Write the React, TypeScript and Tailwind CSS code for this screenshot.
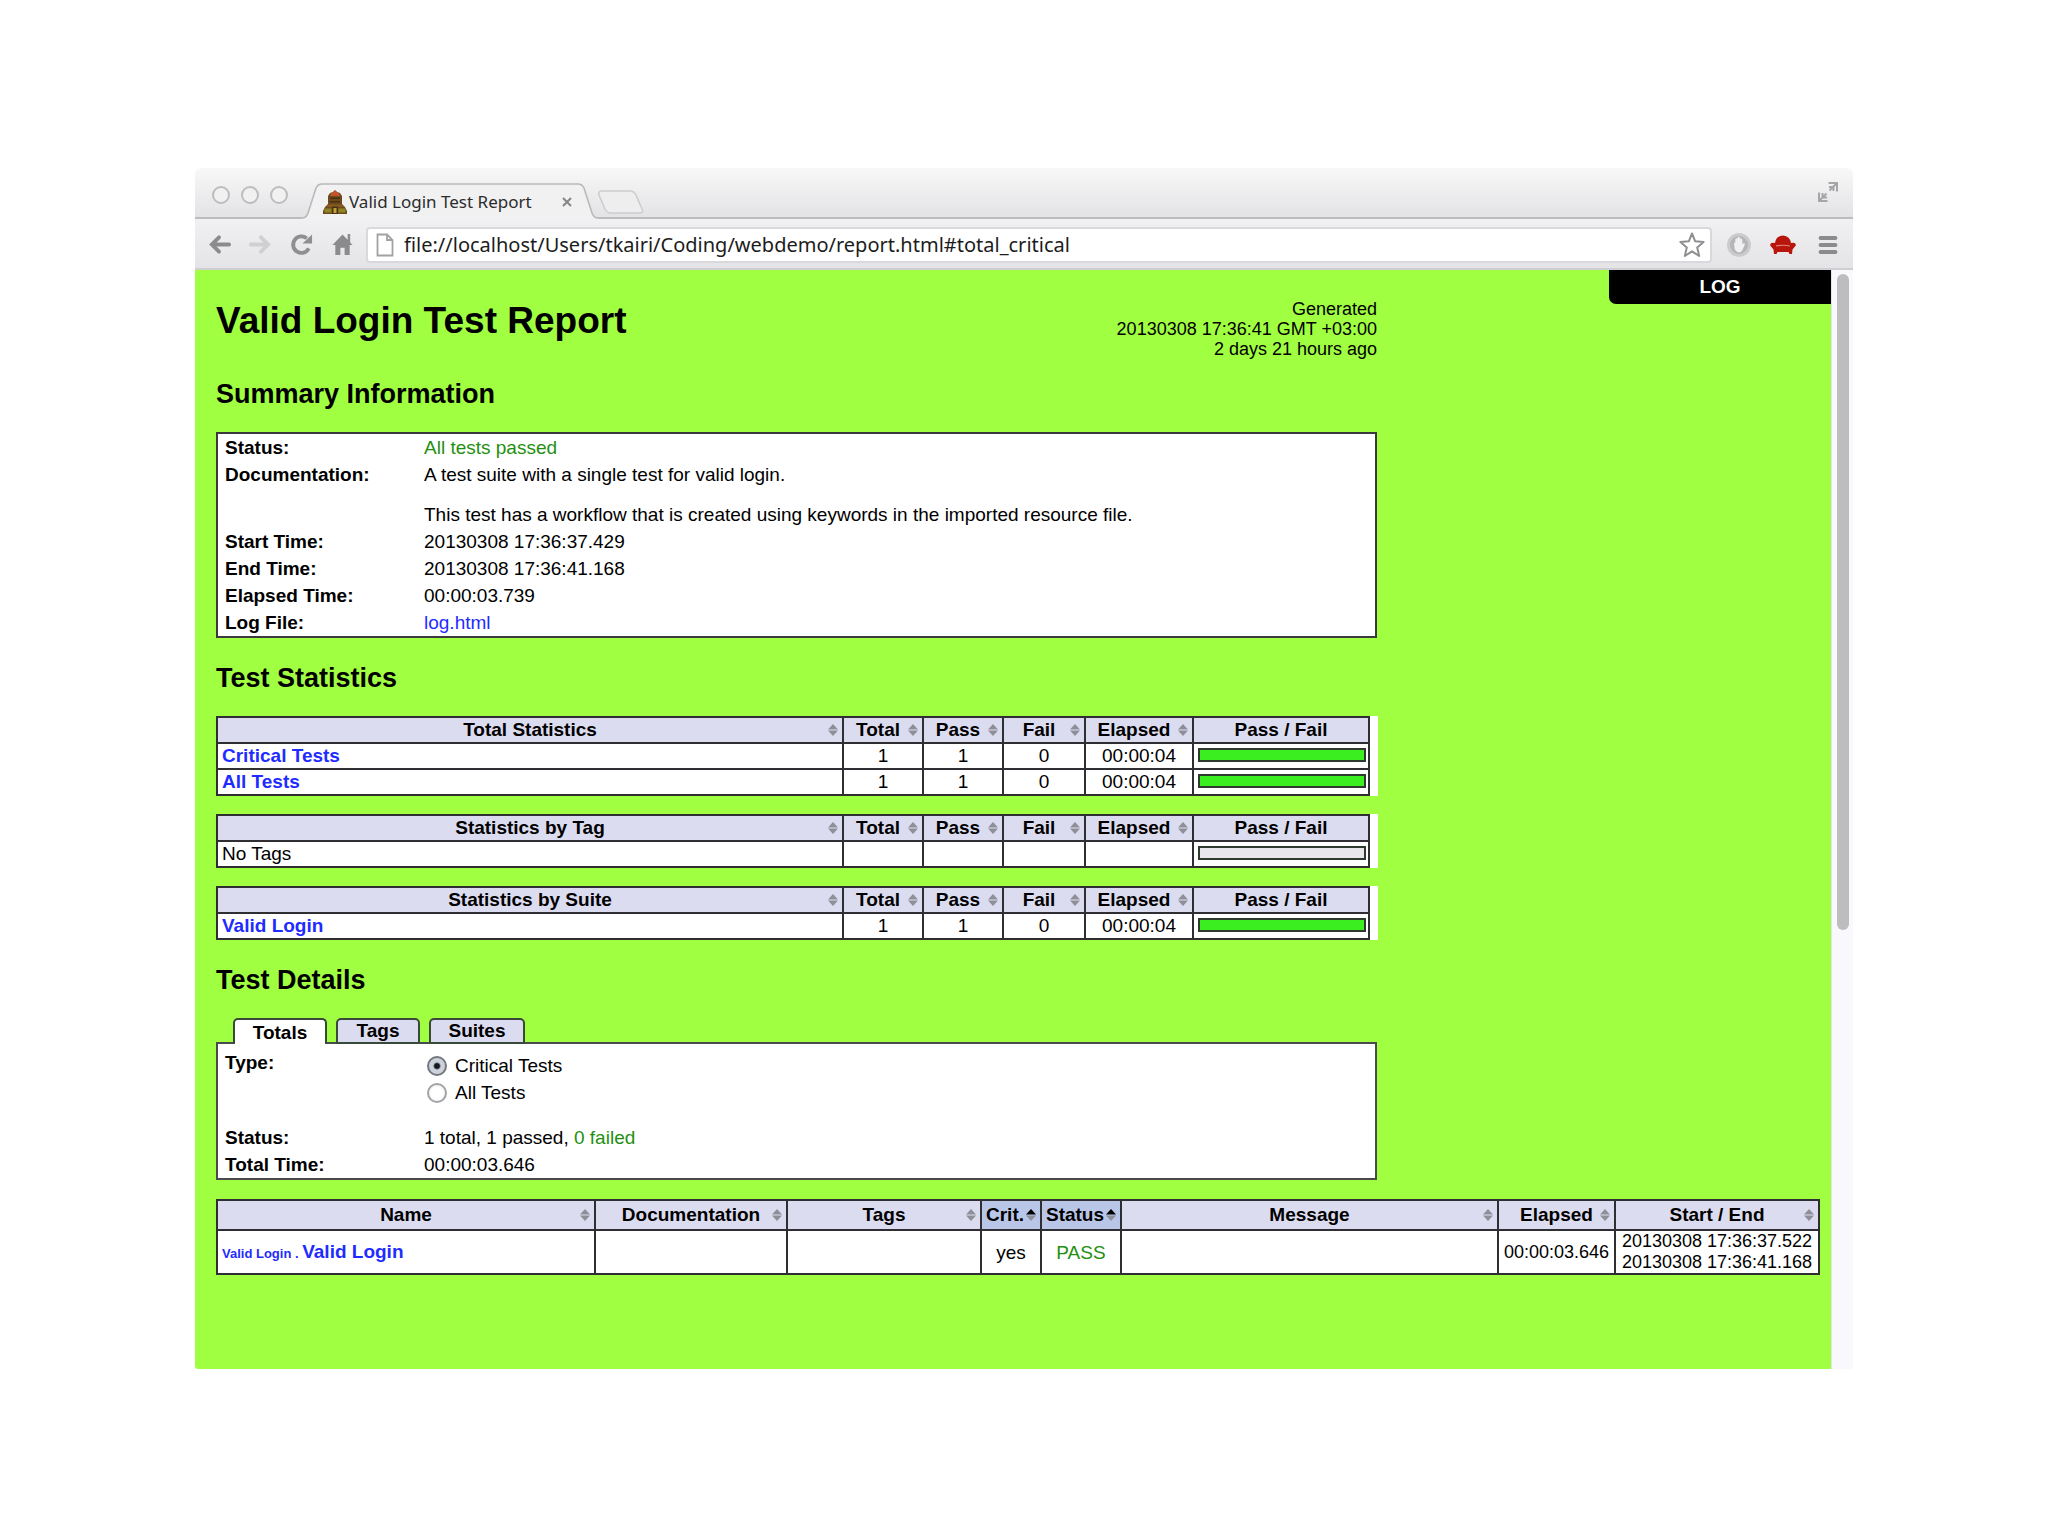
import { useState } from 'react'
import type { ReactNode } from 'react'

type StatRow = { name: string; link?: boolean; total?: string; pass?: string; fail?: string; elapsed?: string }
type StatGroup = { title: string; rows: StatRow[] }

const stats: StatGroup[] = [
  {
    title: 'Total Statistics',
    rows: [
      { name: 'Critical Tests', link: true, total: '1', pass: '1', fail: '0', elapsed: '00:00:04' },
      { name: 'All Tests', link: true, total: '1', pass: '1', fail: '0', elapsed: '00:00:04' },
    ],
  },
  { title: 'Statistics by Tag', rows: [{ name: 'No Tags' }] },
  {
    title: 'Statistics by Suite',
    rows: [{ name: 'Valid Login', link: true, total: '1', pass: '1', fail: '0', elapsed: '00:00:04' }],
  },
]

const cell = 'border-2 border-[#2e2e33] p-0'

function SortIcon({ active }: { active?: boolean }) {
  return (
    <svg viewBox="0 0 10 12" className="absolute right-[4px] top-1/2 -mt-[6px] h-[12px] w-[10px]">
      <path d="M5 0 L10 5.4 H0 Z" fill={active ? '#000' : '#8f8f99'} />
      <path d="M0 6.6 H10 L5 12 Z" fill="#8f8f99" />
    </svg>
  )
}

function SortHeader({ children, className = '', active }: { children: ReactNode; className?: string; active?: boolean }) {
  return (
    <th className={`${cell} ${active ? 'bg-[#b9c6e8]' : 'bg-[#dcdcf0]'}`}>
      <button type="button" className={`relative block w-full text-center font-bold ${className}`}>
        {children}
        <SortIcon active={active} />
      </button>
    </th>
  )
}

function StatTable({ group }: { group: StatGroup }) {
  return (
    <div className="w-[1162px] max-w-full bg-white pr-[8px]">
      <table className="w-full table-fixed border-collapse text-center leading-[24px]">
        <colgroup>
          <col />
          <col className="w-[80px]" />
          <col className="w-[80px]" />
          <col className="w-[82px]" />
          <col className="w-[108px]" />
          <col className="w-[176px]" />
        </colgroup>
        <thead>
          <tr>
            <SortHeader>{group.title}</SortHeader>
            <SortHeader className="pr-[10px]">Total</SortHeader>
            <SortHeader className="pr-[10px]">Pass</SortHeader>
            <SortHeader className="pr-[10px]">Fail</SortHeader>
            <SortHeader className="pr-[10px]">Elapsed</SortHeader>
            <th className={`${cell} bg-[#dcdcf0]`}>Pass / Fail</th>
          </tr>
        </thead>
        <tbody>
          {group.rows.map((r) => (
            <tr key={r.name} className="h-[26px]">
              <td className={`${cell} text-left`}>
                <div className="px-[4px]">
                  {r.link ? <a href="#stats" className="font-bold text-[#1f2cff]">{r.name}</a> : r.name}
                </div>
              </td>
              <td className={cell}>{r.total}</td>
              <td className={cell}>{r.pass}</td>
              <td className={cell}>{r.fail}</td>
              <td className={cell}>{r.elapsed}</td>
              <td className={cell}>
                <div className={`mr-[2px] mb-[2px] ml-[4px] h-[14px] border-2 border-[#2e3a2e] ${r.total ? 'bg-[#3bee20]' : 'bg-[#e8e6ea]'}`} />
              </td>
            </tr>
          ))}
        </tbody>
      </table>
    </div>
  )
}

function InfoRow({ label, children }: { label: string; children: ReactNode }) {
  return (
    <div className="flex">
      <dt className="w-[199px] shrink-0 font-bold">{label}</dt>
      <dd>{children}</dd>
    </div>
  )
}

function Heading({ children }: { children: ReactNode }) {
  return <h2 className="mt-6 mb-[22px] text-[27px] leading-[32px] font-bold">{children}</h2>
}

function TitleBar() {
  return (
    <div className="relative flex h-[51px] items-end rounded-t-[6px] border-b-2 border-[#bcbcc0] bg-linear-to-b from-[#f8f8f8] to-[#e3e3e6] pl-[17px]">
      <div className="mb-[13px] flex gap-[11px]">
        {['Close', 'Minimize', 'Zoom'].map((n) => (
          <button key={n} type="button" aria-label={n} className="h-[18px] w-[18px] rounded-full border-2 border-[#bdbdbf] bg-[#f1f1f2]" />
        ))}
      </div>
      <div className="relative -mb-[2px] ml-[14px] h-[36px] w-[296px]">
        <svg viewBox="0 0 296 36" className="absolute inset-0 h-full w-full">
          <path d="M0 35 C4 35 5 33 6 30 L14 5 Q16 1 20 1 H276 Q280 1 282 5 L290 30 Q292 35 296 35 V36 H0 Z" fill="#f1f1f2" />
          <path d="M0 35 C4 35 5 33 6 30 L14 5 Q16 1 20 1 H276 Q280 1 282 5 L290 30 Q292 35 296 35" fill="none" stroke="#b9b9bc" strokeWidth="1.6" />
        </svg>
        <div className="relative flex h-full items-center pt-[2px] pr-[26px] pl-[21px]">
          <svg viewBox="0 0 24 24" className="h-[24px] w-[24px]">
            <path d="M7 3 L10 2 L12 0 L14 2 L17 3 L19 6 V14 L22 17 L24 21 V24 H0 V21 L2 17 L5 14 V6 Z" fill="#6b4a1c" />
            <path d="M8 3.5 L12 0.5 L16 3.5 L17 6 H7 Z" fill="#c4542b" />
            <path d="M7 7.5h10v1.5H7zM7 11h10v1.5H7z" fill="#4a2f14" />
            <path d="M5 14.5 H19 L21 17 H3 Z" fill="#8a5a22" />
            <path d="M1.5 18.5 H8.5 V22.5 H1.5 Z M15.5 18.5 H22.5 V22.5 H15.5 Z" fill="#8f8426" />
            <path d="M9 16.5h6V24H9z" fill="#4a3410" />
            <path d="M10.5 18h3v5h-3z" fill="#c0a03c" />
          </svg>
          <span className="ml-[2px] flex-1 font-['Noto_Sans',sans-serif] text-[17px] whitespace-nowrap text-[#2c2c2c]">Valid Login Test Report</span>
          <button type="button" aria-label="Close tab">
            <svg viewBox="0 0 10 10" className="h-[10px] w-[10px]">
              <path d="M1 1 L9 9 M9 1 L1 9" stroke="#858588" strokeWidth="2" />
            </svg>
          </button>
        </div>
      </div>
      <button type="button" aria-label="New tab" className="mb-[3px]">
        <svg viewBox="0 0 46 24" className="h-[24px] w-[46px]">
          <path d="M4 1 H32 Q36 1 38 5 L44 19 Q46 23 41 23 H13 Q9 23 7 19 L1 5 Q0 1 4 1 Z" fill="#eeeeef" stroke="#cdcdd0" strokeWidth="1.6" />
        </svg>
      </button>
      <button type="button" aria-label="Full screen" className="mr-[14px] mb-[14px] ml-auto">
        <svg viewBox="0 0 22 22" className="h-[22px] w-[22px]" fill="none" stroke="#a6a6a9" strokeWidth="2">
          <path d="M11.5 2 H20 V10.5 M19 3 L12.5 9.5 M12 6 H16.5 V10" />
          <path d="M2 11.5 V20 H10.5 M3 19 L9.5 12.5 M5.5 12 V16.5 H10" />
        </svg>
      </button>
    </div>
  )
}

function Toolbar() {
  return (
    <div className="flex h-[51px] items-center border-b-2 border-[#cfced2] bg-linear-to-b from-[#f1f0f2] to-[#e4e3e6] pt-[2px] pr-[15px] pl-[13px]">
      <div className="flex gap-[18px]">
        <button type="button" aria-label="Back">
          <svg viewBox="0 0 24 24" className="h-[23px] w-[23px]" fill="none" stroke="#8b8b8e" strokeWidth="4" strokeLinecap="round">
            <path d="M22 12 H5 M11.5 4.5 L4 12 L11.5 19.5" />
          </svg>
        </button>
        <button type="button" aria-label="Forward">
          <svg viewBox="0 0 24 24" className="h-[23px] w-[23px]" fill="none" stroke="#d0d0d3" strokeWidth="4" strokeLinecap="round">
            <path d="M2 12 H19 M12.5 4.5 L20 12 L12.5 19.5" />
          </svg>
        </button>
        <button type="button" aria-label="Reload">
          <svg viewBox="0 0 24 24" className="h-[23px] w-[23px]">
            <path d="M19.6 16 A8.6 8.6 0 1 1 17.5 5.6" fill="none" stroke="#8f8f92" strokeWidth="4" />
            <path d="M23 1.5 V11 H13 Z" fill="#8f8f92" />
          </svg>
        </button>
        <button type="button" aria-label="Home">
          <svg viewBox="0 0 24 24" className="h-[23px] w-[23px]" fill="#8b8b8e">
            <path d="M12 1.5 L1.5 12.5 H4.5 V23 H9.8 V15.5 H14.2 V23 H19.5 V12.5 H22.5 L20 9.8 V1 H17.4 V7 Z" />
          </svg>
        </button>
      </div>
      <div className="ml-[12px] flex h-[36px] flex-1 items-center rounded-[4px] border-2 border-[#d9d8dc] bg-white pr-[5px] pl-[8px]">
        <svg viewBox="0 0 18 24" className="h-[24px] w-[18px]">
          <path d="M1.5 1.5 H11 L16.5 7 V22.5 H1.5 Z M11 1.5 V7 H16.5" fill="#fff" stroke="#a2a2a5" strokeWidth="1.8" />
        </svg>
        <input
          aria-label="Address"
          defaultValue="file://localhost/Users/tkairi/Coding/webdemo/report.html#total_critical"
          className="ml-[10px] min-w-0 flex-1 bg-transparent font-['Noto_Sans',sans-serif] text-[20px] text-[#1c1c1c] outline-none"
        />
        <button type="button" aria-label="Bookmark">
          <svg viewBox="0 0 26 26" className="h-[26px] w-[26px]">
            <path d="M13 1.5 L16.2 9.3 L24.6 10 L18.2 15.4 L20.2 24 L13 19.3 L5.8 24 L7.8 15.4 L1.4 10 L9.8 9.3 Z" fill="#fff" stroke="#8f8f92" strokeWidth="2" strokeLinejoin="round" />
          </svg>
        </button>
      </div>
      <div className="ml-[14px] flex items-center gap-[18px]">
        <button type="button" aria-label="Ad blocker">
          <svg viewBox="0 0 26 26" className="h-[26px] w-[26px]">
            <circle cx="13" cy="13" r="10.5" fill="#b5b5b7" stroke="#cbcbcd" strokeWidth="3" />
            <path d="M8 12 Q8 10 9.3 10.5 V7 Q10.5 5.5 11.5 7 V5.5 Q13 4 14 5.5 V7 Q15.5 6 16.3 7.5 V12 L18 11 Q19.5 11.5 18.5 13.5 L16.5 18 Q15 20.5 12.5 20.5 Q9.5 20 8.7 17 Z" fill="#f0f0f1" />
          </svg>
        </button>
        <button type="button" aria-label="CouchDB">
          <svg viewBox="0 0 26 20" className="h-[20px] w-[26px]">
            <path d="M5 8 Q6 1 13 0.5 Q20 1 21 8 Q26 7 25.8 10.5 L22.5 14.5 L22 19 H19.5 L18.5 17 H7.5 L6.5 19 H4 L3.5 14.5 L0.2 10.5 Q0 7 5 8 Z" fill="#b8150c" />
            <path d="M6 11 Q13 9.5 20 11" fill="none" stroke="#e4857c" strokeWidth="1.2" />
          </svg>
        </button>
        <button type="button" aria-label="Menu" className="ml-[4px]">
          <svg viewBox="0 0 20 20" className="h-[20px] w-[20px]" stroke="#8b8b8e" strokeWidth="3.8" strokeLinecap="round">
            <path d="M2.5 3 H17.5 M2.5 10 H17.5 M2.5 17 H17.5" />
          </svg>
        </button>
      </div>
    </div>
  )
}

function TestDetails() {
  const [type, setType] = useState('Critical Tests')
  return (
    <>
      <div className="relative z-10 -mb-[2px] flex items-end gap-[9px] pl-[17px] leading-[20px] font-bold">
        <button type="button" className="h-[26px] w-[94px] rounded-t-[5px] border-2 border-b-0 border-[#3a4a3a] bg-white pt-[2px] font-bold">Totals</button>
        <button type="button" className="h-[26px] w-[84px] rounded-t-[5px] border-2 border-[#3a4a3a] bg-[#dcdcf0] font-bold">Tags</button>
        <button type="button" className="h-[26px] w-[96px] rounded-t-[5px] border-2 border-[#3a4a3a] bg-[#dcdcf0] font-bold">Suites</button>
      </div>
      <dl className="w-[1161px] max-w-full border-2 border-[#4a4a4e] bg-white px-[7px] pt-[5px] leading-[27px]">
        <InfoRow label="Type:">
          <div className="pt-[3px] pb-[18px]">
            {['Critical Tests', 'All Tests'].map((t) => (
              <label key={t} className="flex h-[27px] items-center gap-[8px] pl-[3px]">
                <input
                  type="radio"
                  name="type"
                  checked={type === t}
                  onChange={() => setType(t)}
                  className="h-[20px] w-[20px] appearance-none rounded-full border-2 border-[#a3a3a8] bg-radial from-[#ffffff] from-50% to-[#e6e6e8] checked:border-[#75777e] checked:from-[#15171c] checked:from-20% checked:to-[#ccd2dc] checked:to-35%"
                />
                {t}
              </label>
            ))}
          </div>
        </InfoRow>
        <InfoRow label="Status:">
          1 total, 1 passed, <span className="text-[#1f9010]">0 failed</span>
        </InfoRow>
        <InfoRow label="Total Time:">00:00:03.646</InfoRow>
      </dl>
      <table className="mt-[19px] w-full table-fixed border-collapse bg-white text-center">
        <colgroup>
          <col />
          <col className="w-[192px]" />
          <col className="w-[194px]" />
          <col className="w-[60px]" />
          <col className="w-[80px]" />
          <col className="w-[377px]" />
          <col className="w-[117px]" />
          <col className="w-[204px]" />
        </colgroup>
        <thead className="leading-[28px]">
          <tr>
            <SortHeader>Name</SortHeader>
            <SortHeader>Documentation</SortHeader>
            <SortHeader>Tags</SortHeader>
            <SortHeader active className="pr-[12px]">Crit.</SortHeader>
            <SortHeader active className="pr-[12px]">Status</SortHeader>
            <SortHeader>Message</SortHeader>
            <SortHeader>Elapsed</SortHeader>
            <SortHeader>Start / End</SortHeader>
          </tr>
        </thead>
        <tbody className="leading-[21px]">
          <tr className="h-[44px]">
            <td className={`${cell} text-left`}>
              <a href="#test" className="pl-[4px] font-bold text-[#1f2cff]">
                <span className="text-[13px]">Valid Login . </span>
                Valid Login
              </a>
            </td>
            <td className={cell} />
            <td className={cell} />
            <td className={cell}>yes</td>
            <td className={`${cell} text-[#1f9010]`}>PASS</td>
            <td className={cell} />
            <td className={`${cell} text-[18px]`}>00:00:03.646</td>
            <td className={`${cell} text-[18px]`}>
              20130308 17:36:37.522
              <br />
              20130308 17:36:41.168
            </td>
          </tr>
        </tbody>
      </table>
    </>
  )
}

export default function App() {
  return (
    <div className="bg-white px-[195px] py-[168px]">
      <div className="overflow-hidden rounded-t-[6px] rounded-b-[3px] font-['Liberation_Sans',Arial,sans-serif] text-[19px] text-black">
        <TitleBar />
        <Toolbar />
        <div className="flex">
          <main className="relative min-w-0 flex-1 bg-[#a0ff40] pt-[28px] pr-[11px] pb-[94px] pl-[21px]">
            <a href="#log" className="absolute top-0 right-0 w-[222px] rounded-bl-[7px] bg-black text-center leading-[34px] font-bold text-white">
              LOG
            </a>
            <header className="flex h-14 w-[1161px] max-w-full justify-between">
              <h1 className="text-[37px] leading-[46px] font-bold">Valid Login Test Report</h1>
              <p className="pt-px text-right text-[18px] leading-[20px]">
                Generated
                <br />
                20130308 17:36:41 GMT +03:00
                <br />2 days 21 hours ago
              </p>
            </header>

            <Heading>Summary Information</Heading>
            <dl className="w-[1161px] max-w-full border-2 border-[#3a3a3e] bg-white px-[7px] leading-[27px]">
              <InfoRow label="Status:">
                <span className="text-[#1f9010]">All tests passed</span>
              </InfoRow>
              <InfoRow label="Documentation:">
                <p>A test suite with a single test for valid login.</p>
                <p className="mt-[13px]">This test has a workflow that is created using keywords in the imported resource file.</p>
              </InfoRow>
              <InfoRow label="Start Time:">20130308 17:36:37.429</InfoRow>
              <InfoRow label="End Time:">20130308 17:36:41.168</InfoRow>
              <InfoRow label="Elapsed Time:">00:00:03.739</InfoRow>
              <InfoRow label="Log File:">
                <a href="#log" className="text-[#1f2cff]">log.html</a>
              </InfoRow>
            </dl>

            <Heading>Test Statistics</Heading>
            <div className="flex flex-col gap-[18px]">
              {stats.map((g) => (
                <StatTable key={g.title} group={g} />
              ))}
            </div>

            <Heading>Test Details</Heading>
            <TestDetails />
          </main>
          <div className="w-[22px] border-l border-[#e4e2ea] bg-[#f9f8fc] pt-[4px] pl-[5px]">
            <div className="h-[656px] w-[12px] rounded-full bg-[#bdbcbf]" />
          </div>
        </div>
      </div>
    </div>
  )
}
